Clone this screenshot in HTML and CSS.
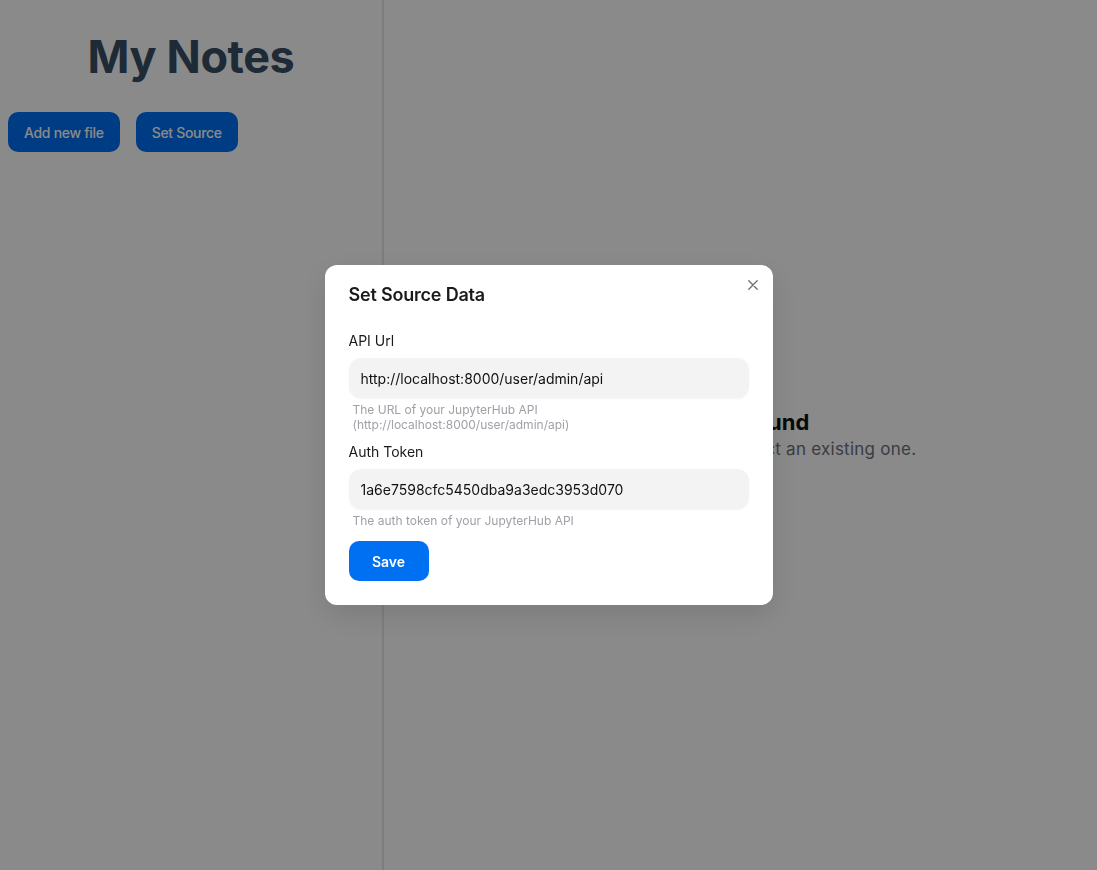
FILE: index.html
```html
<!DOCTYPE html>
<html lang="en">
<head>
<meta charset="utf-8">
<title>My Notes</title>
<link rel="stylesheet" href="styles.css">
</head>
<body>
<div class="app">
  <aside class="sidebar">
    <h1 class="title">My Notes</h1>
    <div class="actions">
      <button class="btn">Add new file</button>
      <button class="btn">Set Source</button>
    </div>
  </aside>
  <main class="main">
    <div class="empty">
      <h2 class="empty-title">No file found</h2>
      <p class="empty-text">Create a new file or select an existing one.</p>
    </div>
  </main>
</div>

<div class="overlay">
  <div class="modal" role="dialog">
    <button class="close" aria-label="Close">
      <svg width="10" height="10" viewBox="0 0 10 10"><path d="M0.8 0.8L9.2 9.2M9.2 0.8L0.8 9.2" stroke="#6b6b75" stroke-width="1.3" stroke-linecap="round"/></svg>
    </button>
    <h3 class="modal-title">Set Source Data</h3>
    <div class="modal-body">
      <div class="field">
        <label class="label">API Url</label>
        <div class="input">http://localhost:8000/user/admin/api</div>
        <div class="help">The URL of your JupyterHub API<br>(http://localhost:8000/user/admin/api)</div>
      </div>
      <div class="field">
        <label class="label">Auth Token</label>
        <div class="input">1a6e7598cfc5450dba9a3edc3953d070</div>
        <div class="help">The auth token of your JupyterHub API</div>
      </div>
      <button class="save">Save</button>
    </div>
  </div>
</div>
</body>
</html>
```
FILE: styles.css
```css
* { box-sizing: border-box; }
html, body { margin: 0; padding: 0; }
body {
  font-family: Inter, "Noto Sans", sans-serif;
  background: #ffffff;
  color: #1a1a1a;
}
.app {
  display: flex;
  height: 100vh;
}
.sidebar {
  width: 384px;
  flex: none;
  border-right: 2px solid #e2e8f0;
  padding: 8px;
}
.title {
  margin: 22px 0 0;
  text-align: center;
  font-size: 45px;
  line-height: 54px;
  font-weight: 700;
  color: #394e62;
  letter-spacing: -0.4px;
}
.actions {
  display: flex;
  gap: 16px;
  margin-top: 28px;
}
.btn {
  height: 40px;
  padding: 0 16px;
  border: none;
  border-radius: 10px;
  background: #0070f3;
  color: #ffffff;
  font-family: inherit;
  font-size: 14px;
  font-weight: 500;
  letter-spacing: -0.3px;
}
.main {
  flex: 1;
  display: flex;
  align-items: center;
  justify-content: center;
}
.empty { text-align: center; }
.empty-title {
  margin: 0;
  font-size: 22px;
  line-height: 28px;
  font-weight: 700;
  color: #111111;
}
.empty-text {
  margin: 0;
  font-size: 17px;
  line-height: 26px;
  color: #6b7080;
  letter-spacing: 0.25px;
}
.overlay {
  position: fixed;
  inset: 0;
  background: rgba(0, 0, 0, 0.46);
  display: flex;
  align-items: center;
  justify-content: center;
}
.modal {
  position: relative;
  width: 448px;
  background: #ffffff;
  border-radius: 12px;
  padding: 16px 24px 24px;
  box-shadow: 0 10px 30px rgba(0, 0, 0, 0.12);
}
.close {
  position: absolute;
  top: 12px;
  right: 12px;
  width: 16px;
  height: 16px;
  border: none;
  background: transparent;
  padding: 0;
  display: flex;
  align-items: center;
  justify-content: center;
}
.modal-title {
  margin: 0;
  font-size: 18px;
  line-height: 28px;
  font-weight: 600;
  color: #1a1a1a;
  letter-spacing: -0.2px;
}
.modal-body {
  margin-top: 22px;
}
.field { margin-bottom: 10px; }
.label {
  display: block;
  font-size: 14px;
  line-height: 20px;
  color: #1a1a1a;
  margin-bottom: 7px;
}
.input {
  height: 40px;
  background: #f3f3f3;
  border-radius: 12px;
  padding: 0 12px;
  display: flex;
  align-items: center;
  font-size: 14px;
  color: #111111;
  box-shadow: 0 1px 2px rgba(0, 0, 0, 0.05);
}
.help {
  margin-top: 4px;
  padding-left: 4px;
  font-size: 12px;
  line-height: 15px;
  color: #a0a0a8;
}
.save {
  margin-top: 3px;
  width: 80px;
  height: 40px;
  border: none;
  border-radius: 10px;
  background: #0070f3;
  color: #ffffff;
  font-family: inherit;
  font-size: 14px;
  font-weight: 600;
}
```
